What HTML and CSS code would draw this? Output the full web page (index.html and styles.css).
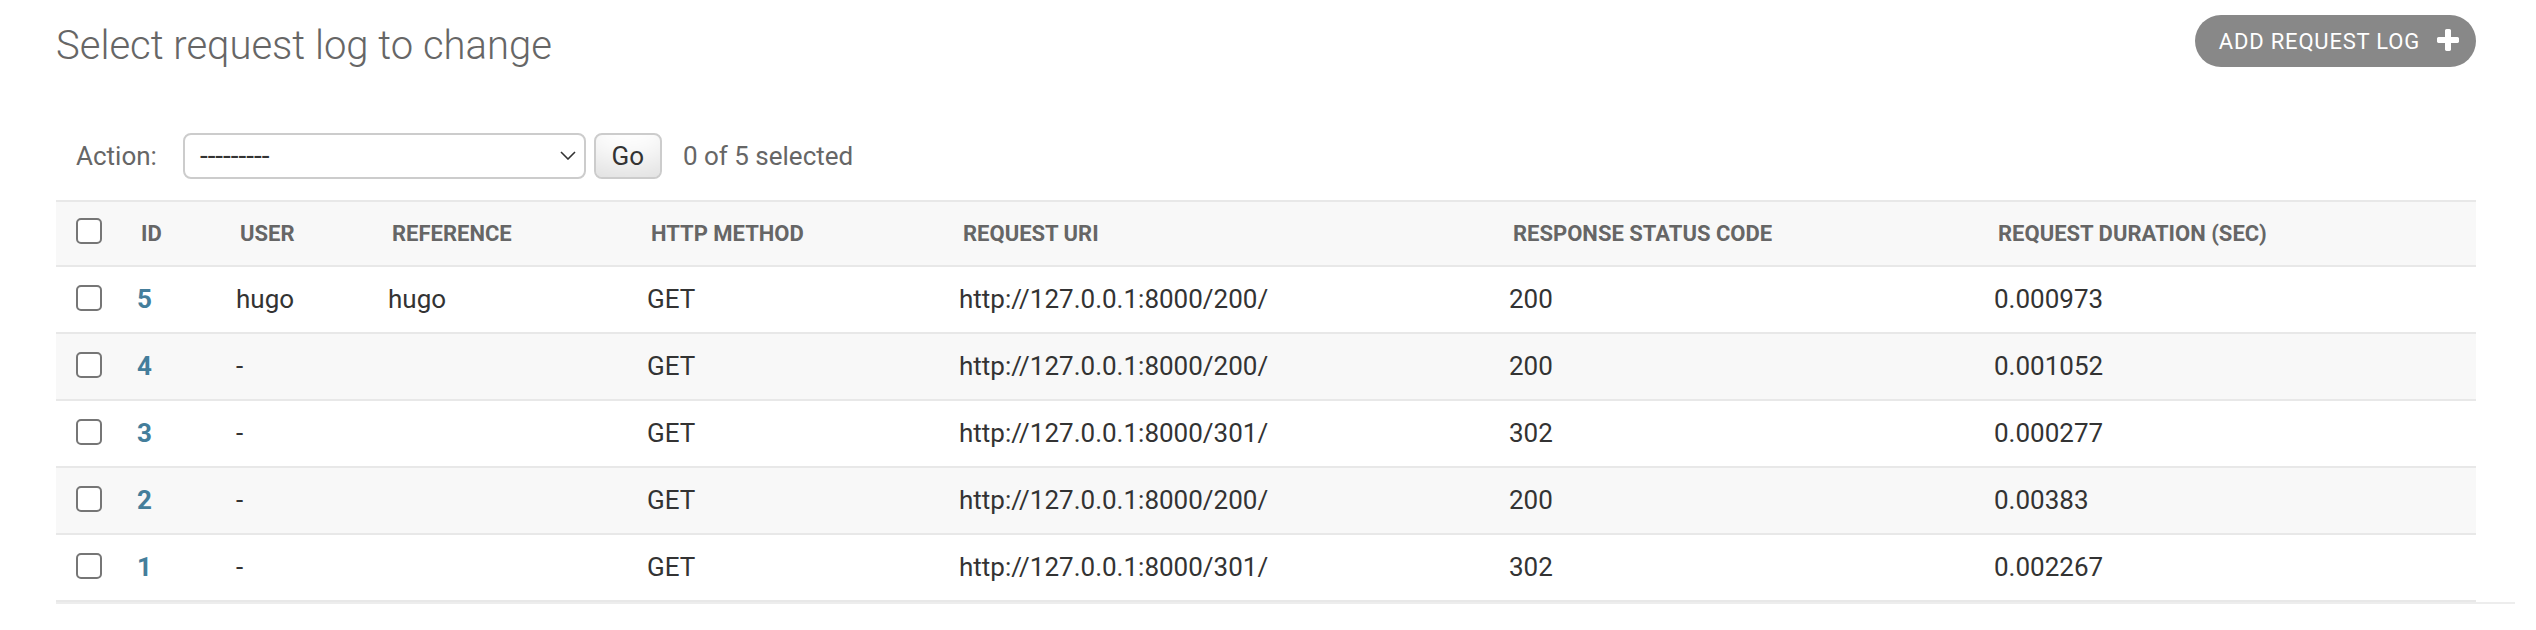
FILE: index.html
```html
<!DOCTYPE html>
<html lang="en">
<head>
<meta charset="utf-8">
<title>Select request log to change</title>
<link rel="stylesheet" href="styles.css">
</head>
<body>
<div class="content">
  <div class="page-head">
    <h1>Select request log to change</h1>
    <a class="addlink" href="#">Add request log<svg viewBox="0 0 1792 1792" aria-hidden="true"><path fill="#ffffff" d="M1600 736v192q0 40-28 68t-68 28h-416v416q0 40-28 68t-68 28h-192q-40 0-68-28t-28-68v-416h-416q-40 0-68-28t-28-68v-192q0-40 28-68t68-28h416v-416q0-40 28-68t68-28h192q40 0 68 28t28 68v416h416q40 0 68 28t28 68z"/></svg></a>
  </div>
  <div class="changelist">
    <div class="actions">
      <label class="action-label">Action:</label>
      <div class="select"><span>---------</span><svg class="chevron" viewBox="0 0 16 9" aria-hidden="true"><path d="M1 1l7 7 7-7" fill="none" stroke="#333" stroke-width="1.6"/></svg></div>
      <button class="go" type="button">Go</button>
      <span class="counter">0 of 5 selected</span>
    </div>
    <table class="results">
      <colgroup>
        <col class="c-cb"><col class="c-id"><col class="c-user"><col class="c-ref"><col class="c-method"><col class="c-uri"><col class="c-status"><col class="c-dur">
      </colgroup>
      <thead>
        <tr>
          <th class="cb"><input type="checkbox" aria-label="Select all"></th>
          <th>ID</th>
          <th>User</th>
          <th>Reference</th>
          <th>HTTP method</th>
          <th>Request URI</th>
          <th>Response status code</th>
          <th>Request duration (sec)</th>
        </tr>
      </thead>
      <tbody>
        <tr>
          <td class="cb"><input type="checkbox" aria-label="Select"></td>
          <th class="idcell"><a href="#">5</a></th>
          <td>hugo</td><td>hugo</td><td>GET</td><td>http://127.0.0.1:8000/200/</td><td>200</td><td>0.000973</td>
        </tr>
        <tr>
          <td class="cb"><input type="checkbox" aria-label="Select"></td>
          <th class="idcell"><a href="#">4</a></th>
          <td>-</td><td></td><td>GET</td><td>http://127.0.0.1:8000/200/</td><td>200</td><td>0.001052</td>
        </tr>
        <tr>
          <td class="cb"><input type="checkbox" aria-label="Select"></td>
          <th class="idcell"><a href="#">3</a></th>
          <td>-</td><td></td><td>GET</td><td>http://127.0.0.1:8000/301/</td><td>302</td><td>0.000277</td>
        </tr>
        <tr>
          <td class="cb"><input type="checkbox" aria-label="Select"></td>
          <th class="idcell"><a href="#">2</a></th>
          <td>-</td><td></td><td>GET</td><td>http://127.0.0.1:8000/200/</td><td>200</td><td>0.00383</td>
        </tr>
        <tr>
          <td class="cb"><input type="checkbox" aria-label="Select"></td>
          <th class="idcell"><a href="#">1</a></th>
          <td>-</td><td></td><td>GET</td><td>http://127.0.0.1:8000/301/</td><td>302</td><td>0.002267</td>
        </tr>
      </tbody>
    </table>
    <div class="paginator"></div>
  </div>
</div>
</body>
</html>
```
FILE: styles.css
```css
* { box-sizing: border-box; }
body {
  margin: 0;
  background: #fff;
  color: #333;
  font-family: Roboto, "Liberation Sans", Arial, sans-serif;
}
.content { padding: 15px 60px 0 56px; }
.page-head {
  display: flex;
  justify-content: space-between;
  align-items: flex-start;
}
h1 {
  margin: 3px 0 37px;
  font-size: 40px;
  line-height: 56px;
  font-weight: 300;
  color: #666;
}
.addlink {
  display: flex;
  align-items: center;
  height: 52px;
  padding: 0 14px 0 24px;
  background: #888;
  color: #fff;
  border-radius: 30px;
  font-size: 22px;
  letter-spacing: 0.8px;
  text-transform: uppercase;
  text-decoration: none;
}
.addlink svg { width: 28px; height: 28px; margin-left: 14px; }

.actions {
  display: flex;
  align-items: center;
  height: 89px;
  padding: 20px;
  color: #666;
  font-size: 26px;
}
.action-label { margin-right: 26px; }
.select {
  display: flex;
  align-items: center;
  justify-content: space-between;
  width: 403px;
  height: 46px;
  padding: 0 8px 0 15px;
  border: 2px solid #ccc;
  border-radius: 8px;
  color: #333;
  font-size: 28px;
  background: #fff;
}
.chevron { width: 16px; height: 9px; }
.go {
  margin-left: 8px;
  width: 68px;
  height: 46px;
  padding: 0;
  border: 2px solid #ccc;
  border-radius: 8px;
  background: #fff;
  box-shadow: inset 0 -30px 40px -20px rgba(0, 0, 0, 0.15);
  color: #333;
  font-family: inherit;
  font-size: 26px;
}
.counter { margin-left: 21px; }

.results {
  width: 100%;
  border-collapse: collapse;
  table-layout: fixed;
}
.c-cb { width: 65px; }
.c-id { width: 99px; }
.c-user { width: 152px; }
.c-ref { width: 259px; }
.c-method { width: 312px; }
.c-uri { width: 550px; }
.c-status { width: 485px; }
.c-dur { width: 498px; }

.results th, .results td {
  padding: 16px;
  text-align: left;
  vertical-align: top;
  font-size: 26px;
  line-height: 33px;
  font-weight: 400;
  border-bottom: 2px solid #e8e8e8;
  white-space: nowrap;
}
.results thead th {
  padding: 17px 20px 16px;
  font-size: 22px;
  line-height: 30px;
  font-weight: 700;
  color: #666;
  background: #f8f8f8;
  border-top: 2px solid #e8e8e8;
  text-transform: uppercase;
}
.results thead th.cb { padding: 16px 0 0; }
.results td.cb { padding: 18px 0 0; }
.results tbody tr:nth-child(even) { background: #f8f8f8; }
.results .idcell a {
  color: #447e9b;
  font-weight: 700;
  text-decoration: none;
}
.results input[type="checkbox"] {
  -webkit-appearance: none;
  appearance: none;
  display: block;
  width: 26px;
  height: 26px;
  margin: 0 auto;
  border: 2px solid #767676;
  border-radius: 5px;
  background: #fff;
}
.paginator {
  height: 28px;
  margin-right: -39px;
  border-top: 2px solid #ededed;
}
```
